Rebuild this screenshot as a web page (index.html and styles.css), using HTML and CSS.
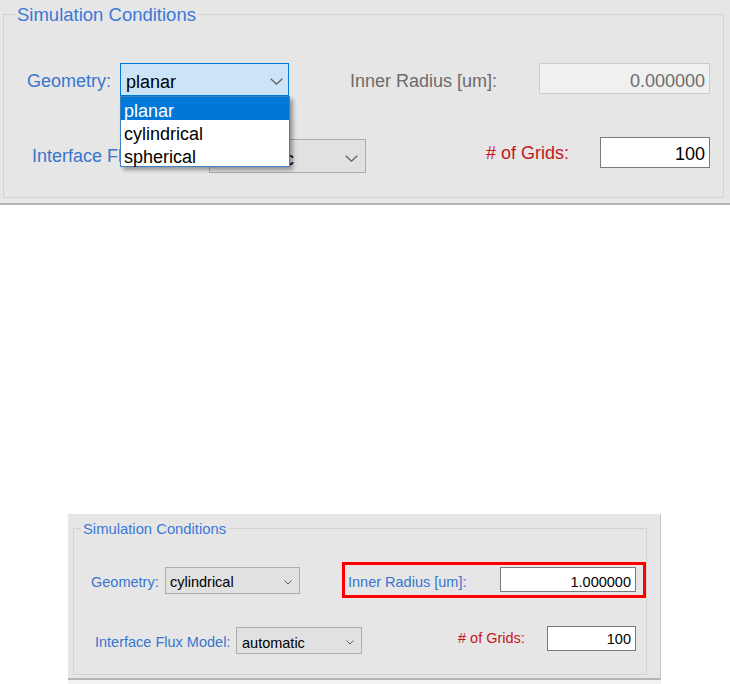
FILE: index.html
```html
<!DOCTYPE html>
<html>
<head>
<meta charset="utf-8">
<title>Simulation Conditions</title>
<link rel="stylesheet" href="styles.css">
</head>
<body>
<div class="shot shot-top">
  <div class="group group-top">
    <span class="group-title">Simulation Conditions</span>
    <div class="row t-r1">
      <span class="lbl blue t-geo-l">Geometry:</span>
      <div class="combo focused t-geo-c">
        <span class="combo-text">planar</span>
        <svg class="chev" width="13" height="7" viewBox="0 0 13 7"><path d="M0.7 0.7 L6.5 6.2 L12.3 0.7" fill="none" stroke="#5c5c5c" stroke-width="1.2"/></svg>
        <ul class="dropdown">
          <li class="sel">planar</li>
          <li>cylindrical</li>
          <li>spherical</li>
        </ul>
      </div>
      <span class="lbl gray t-rad-l">Inner Radius [um]:</span>
      <div class="tb disabled t-rad-t">0.000000</div>
    </div>
    <div class="row t-r2">
      <span class="lbl blue t-flux-l">Interface Flux Model:</span>
      <div class="combo t-flux-c">
        <span class="combo-text">automatic</span>
        <svg class="chev" width="13" height="7" viewBox="0 0 13 7"><path d="M0.7 0.7 L6.5 6.2 L12.3 0.7" fill="none" stroke="#5c5c5c" stroke-width="1.2"/></svg>
      </div>
      <span class="lbl red t-grid-l"># of Grids:</span>
      <div class="tb t-grid-t">100</div>
    </div>
  </div>
</div>

<div class="shot shot-bottom">
  <div class="group group-bottom">
    <span class="group-title">Simulation Conditions</span>
    <div class="row b-r1">
      <span class="lbl blue b-geo-l">Geometry:</span>
      <div class="combo b-geo-c">
        <span class="combo-text">cylindrical</span>
        <svg class="chev" width="8" height="5" viewBox="0 0 8 5"><path d="M0.5 0.5 L4 4 L7.5 0.5" fill="none" stroke="#5c5c5c" stroke-width="1"/></svg>
      </div>
      <div class="highlight">
        <span class="lbl blue b-rad-l">Inner Radius [um]:</span>
        <div class="tb b-rad-t">1.000000</div>
      </div>
    </div>
    <div class="row b-r2">
      <span class="lbl blue b-flux-l">Interface Flux Model:</span>
      <div class="combo b-flux-c">
        <span class="combo-text">automatic</span>
        <svg class="chev" width="8" height="5" viewBox="0 0 8 5"><path d="M0.5 0.5 L4 4 L7.5 0.5" fill="none" stroke="#5c5c5c" stroke-width="1"/></svg>
      </div>
      <span class="lbl red b-grid-l"># of Grids:</span>
      <div class="tb b-grid-t">100</div>
    </div>
  </div>
</div>
<div class="shot-strip"></div>
</body>
</html>
```
FILE: styles.css
```css
* { box-sizing: border-box; }
html, body { margin: 0; padding: 0; background: #ffffff; }
body {
  width: 730px;
  height: 684px;
  overflow: hidden;
  font-family: "Liberation Sans", Arial, sans-serif;
  color: #000;
}

.shot { background: #e6e6e6; }

.shot-top {
  width: 730px;
  height: 205px;
  padding: 14px 6px 0 3px;
  border-bottom: 2px solid #b4b4b4;
  font-size: 18px;
  line-height: 20px;
}

.shot-bottom {
  width: 593px;
  height: 166px;
  margin-top: 309px;
  margin-left: 68px;
  padding: 14px 13px 0 5px;
  border-right: 1px solid #c6c6c6;
  border-bottom: 2px solid #b4b4b4;
  font-size: 14.5px;
  line-height: 16px;
}

.shot-strip {
  width: 593px;
  height: 4px;
  margin-left: 68px;
  background: #f2f2f2;
}

.group {
  position: relative;
  border: 1px solid #d3d3d3;
}
.group-top { width: 721px; height: 184px; }
.group-bottom { width: 574px; height: 147px; }

.group-title {
  position: absolute;
  background: #e6e6e6;
  padding: 0 2px;
  color: #3b79d6;
  white-space: nowrap;
}
.group-top .group-title { left: 11px; top: -10px; font-size: 18.5px; }
.group-bottom .group-title { left: 7px; top: -8px; font-size: 14.8px; }

.row {
  display: flex;
  align-items: flex-start;
}

.lbl { display: block; white-space: nowrap; }
.blue { color: #3676cf; }
.gray { color: #6b6b6b; }
.red { color: #c4161c; }

.combo {
  position: relative;
  display: flex;
  align-items: center;
  background: #e1e1e1;
  border: 1px solid #adadad;
  white-space: nowrap;
}
.combo.focused {
  background: #cce4f7;
  border-color: #0078d7;
}
.combo-text { display: block; }
.chev { display: block; margin-left: auto; flex: none; }

.tb {
  background: #ffffff;
  border: 1px solid #7a7a7a;
  text-align: right;
  white-space: nowrap;
}
.tb.disabled {
  background: #f0f0f0;
  border-color: #cccccc;
  color: #6d6d6d;
}

/* ---------- top screenshot ---------- */
.t-r1 { margin-top: 48px; }
.t-geo-l { margin-left: 23px; width: 93px; margin-top: 8px; }
.t-geo-c { width: 169px; height: 33px; padding: 4px 0 0 5px; }
.t-geo-c .chev { margin-right: 5px; }
.t-rad-l { margin-left: 61px; width: 189px; margin-top: 8px; }
.t-rad-t { width: 171px; height: 31px; padding: 7px 4px 0 0; }

.t-r2 { margin-top: 41px; }
.t-flux-l { margin-left: 28px; width: 177px; margin-top: 9px; }
.t-flux-c { width: 157px; height: 34px; margin-top: 2px; padding: 5px 0 0 6px; }
.t-flux-c .chev { margin-right: 7px; }
.t-grid-l { margin-left: 120px; width: 114px; margin-top: 6px; }
.t-grid-t { width: 110px; height: 31px; padding: 6px 4px 0 0; }

.dropdown {
  position: absolute;
  left: -1px;
  top: 32px;
  width: 170px;
  margin: 0;
  padding: 0;
  list-style: none;
  background: #ffffff;
  border: 1px solid #3b7fc4;
  box-shadow: 3px 3px 4px rgba(0, 0, 0, 0.35);
  z-index: 5;
}
.dropdown li {
  height: 23px;
  padding: 5px 0 0 3px;
  line-height: 18px;
  color: #000;
}
.dropdown li.sel {
  background: #0078d7;
  color: #ffffff;
}

/* ---------- bottom screenshot ---------- */
.b-r1 { margin-top: 38px; }
.b-geo-l { margin-left: 17px; width: 74px; margin-top: 7px; }
.b-geo-c { width: 135px; height: 27px; padding: 3px 0 0 4px; }
.b-geo-c .chev { margin-right: 7px; }

.highlight {
  position: relative;
  display: flex;
  align-items: flex-start;
  margin-left: 48px;
}
.highlight::after {
  content: "";
  position: absolute;
  left: -6px;
  right: -10px;
  top: -5px;
  bottom: -6px;
  border: 3px solid #ff0000;
}
.b-rad-l { width: 152px; margin-top: 7px; }
.b-rad-t { width: 136px; height: 25px; padding: 6px 4px 0 0; }

.b-r2 { margin-top: 32px; }
.b-flux-l { margin-left: 21px; width: 141px; margin-top: 8px; }
.b-flux-c { width: 126px; height: 27px; margin-top: 1px; padding: 4px 0 0 5px; }
.b-flux-c .chev { margin-right: 7px; }
.b-grid-l { margin-left: 96px; width: 89px; margin-top: 4px; }
.b-grid-t { width: 89px; height: 25px; padding: 4px 4px 0 0; }
```
